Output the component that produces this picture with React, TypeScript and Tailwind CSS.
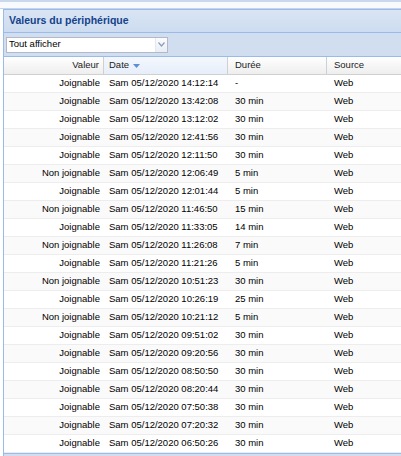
import React from "react";

const rows: [string, string, string, string][] = [
  ["Joignable", "Sam 05/12/2020 14:12:14", "-", "Web"],
  ["Joignable", "Sam 05/12/2020 13:42:08", "30 min", "Web"],
  ["Joignable", "Sam 05/12/2020 13:12:02", "30 min", "Web"],
  ["Joignable", "Sam 05/12/2020 12:41:56", "30 min", "Web"],
  ["Joignable", "Sam 05/12/2020 12:11:50", "30 min", "Web"],
  ["Non joignable", "Sam 05/12/2020 12:06:49", "5 min", "Web"],
  ["Joignable", "Sam 05/12/2020 12:01:44", "5 min", "Web"],
  ["Non joignable", "Sam 05/12/2020 11:46:50", "15 min", "Web"],
  ["Joignable", "Sam 05/12/2020 11:33:05", "14 min", "Web"],
  ["Non joignable", "Sam 05/12/2020 11:26:08", "7 min", "Web"],
  ["Joignable", "Sam 05/12/2020 11:21:26", "5 min", "Web"],
  ["Non joignable", "Sam 05/12/2020 10:51:23", "30 min", "Web"],
  ["Joignable", "Sam 05/12/2020 10:26:19", "25 min", "Web"],
  ["Non joignable", "Sam 05/12/2020 10:21:12", "5 min", "Web"],
  ["Joignable", "Sam 05/12/2020 09:51:02", "30 min", "Web"],
  ["Joignable", "Sam 05/12/2020 09:20:56", "30 min", "Web"],
  ["Joignable", "Sam 05/12/2020 08:50:50", "30 min", "Web"],
  ["Joignable", "Sam 05/12/2020 08:20:44", "30 min", "Web"],
  ["Joignable", "Sam 05/12/2020 07:50:38", "30 min", "Web"],
  ["Joignable", "Sam 05/12/2020 07:20:32", "30 min", "Web"],
  ["Joignable", "Sam 05/12/2020 06:50:26", "30 min", "Web"],
];

const cols = "grid grid-cols-[100px_124px_99px_1fr]";

export default function App() {
  return (
    <div
      className="w-[401px] h-[456px] overflow-hidden bg-white text-[9.5px] text-black"
      style={{ fontFamily: '"Liberation Sans", Arial, sans-serif' }}
    >
      {/* top strip from previous element */}
      <div className="h-[2px] bg-[#c9d8ed]" />
      <div className="h-[7px] bg-[#f8fafd] border-b border-[#c3d4ec]" />
      <div className="pl-[3px]">
        <div className="border-l border-t border-[#99bbe8] flex flex-col">
          {/* panel header */}
          <div className="h-[23px] bg-gradient-to-b from-[#d9e5f4] to-[#cddcf0] border-b border-[#99bbe8] flex items-center pl-[5px]">
            <span className="font-bold text-[10.5px] text-[#15428b]">Valeurs du périphérique</span>
          </div>
          {/* toolbar */}
          <div className="h-[24px] bg-[#d0def0] border-b border-[#99bbe8] flex items-center pl-[2px]">
            <div className="flex h-[16px] w-[162px] border border-[#b5b8c8] bg-white">
              <div className="flex-1 flex items-center pl-[2px] text-[9.5px]">Tout afficher</div>
              <div className="w-[12px] flex items-center justify-center border-l border-[#e5e8ee] bg-gradient-to-b from-[#fbfcfe] to-[#e9eef5]">
                <svg width="7" height="5" viewBox="0 0 7 5">
                  <path d="M0.5 0.5 L3.5 4 L6.5 0.5" fill="none" stroke="#8a9db8" strokeWidth="1.2" />
                </svg>
              </div>
            </div>
          </div>
          {/* grid header */}
          <div className={`${cols} h-[18px] bg-gradient-to-b from-[#ffffff] to-[#eeeeee] border-b border-[#d0d0d0] text-[#222]`}>
            <div className="flex items-center justify-end pr-[4px] border-r border-[#d0d0d0]">Valeur</div>
            <div className="flex items-center pl-[5px] border-r border-[#d0d0d0] bg-gradient-to-b from-[#f4f8fd] to-[#e6eefa]">
              Date
              <svg width="7" height="4" viewBox="0 0 7 4" className="ml-[4px]">
                <path d="M0 0 L7 0 L3.5 4 Z" fill="#5b8ed4" />
              </svg>
            </div>
            <div className="flex items-center pl-[7px] border-r border-[#d0d0d0]">Durée</div>
            <div className="flex items-center pl-[7px]">Source</div>
          </div>
          {/* rows */}
          {rows.map((r, i) => (
            <div
              key={i}
              className={`${cols} h-[18px] border-b border-[#ededed] ${i % 2 === 1 ? "bg-[#fafafa]" : "bg-white"}`}
            >
              <div className="flex items-center justify-end pr-[4px]">{r[0]}</div>
              <div className="flex items-center pl-[5px]">{r[1]}</div>
              <div className="flex items-center pl-[7px]">{r[2]}</div>
              <div className="flex items-center pl-[7px]">{r[3]}</div>
            </div>
          ))}
          <div className="h-[10px] bg-[#d0def0] border-t border-[#99bbe8]" />
        </div>
      </div>
    </div>
  );
}
